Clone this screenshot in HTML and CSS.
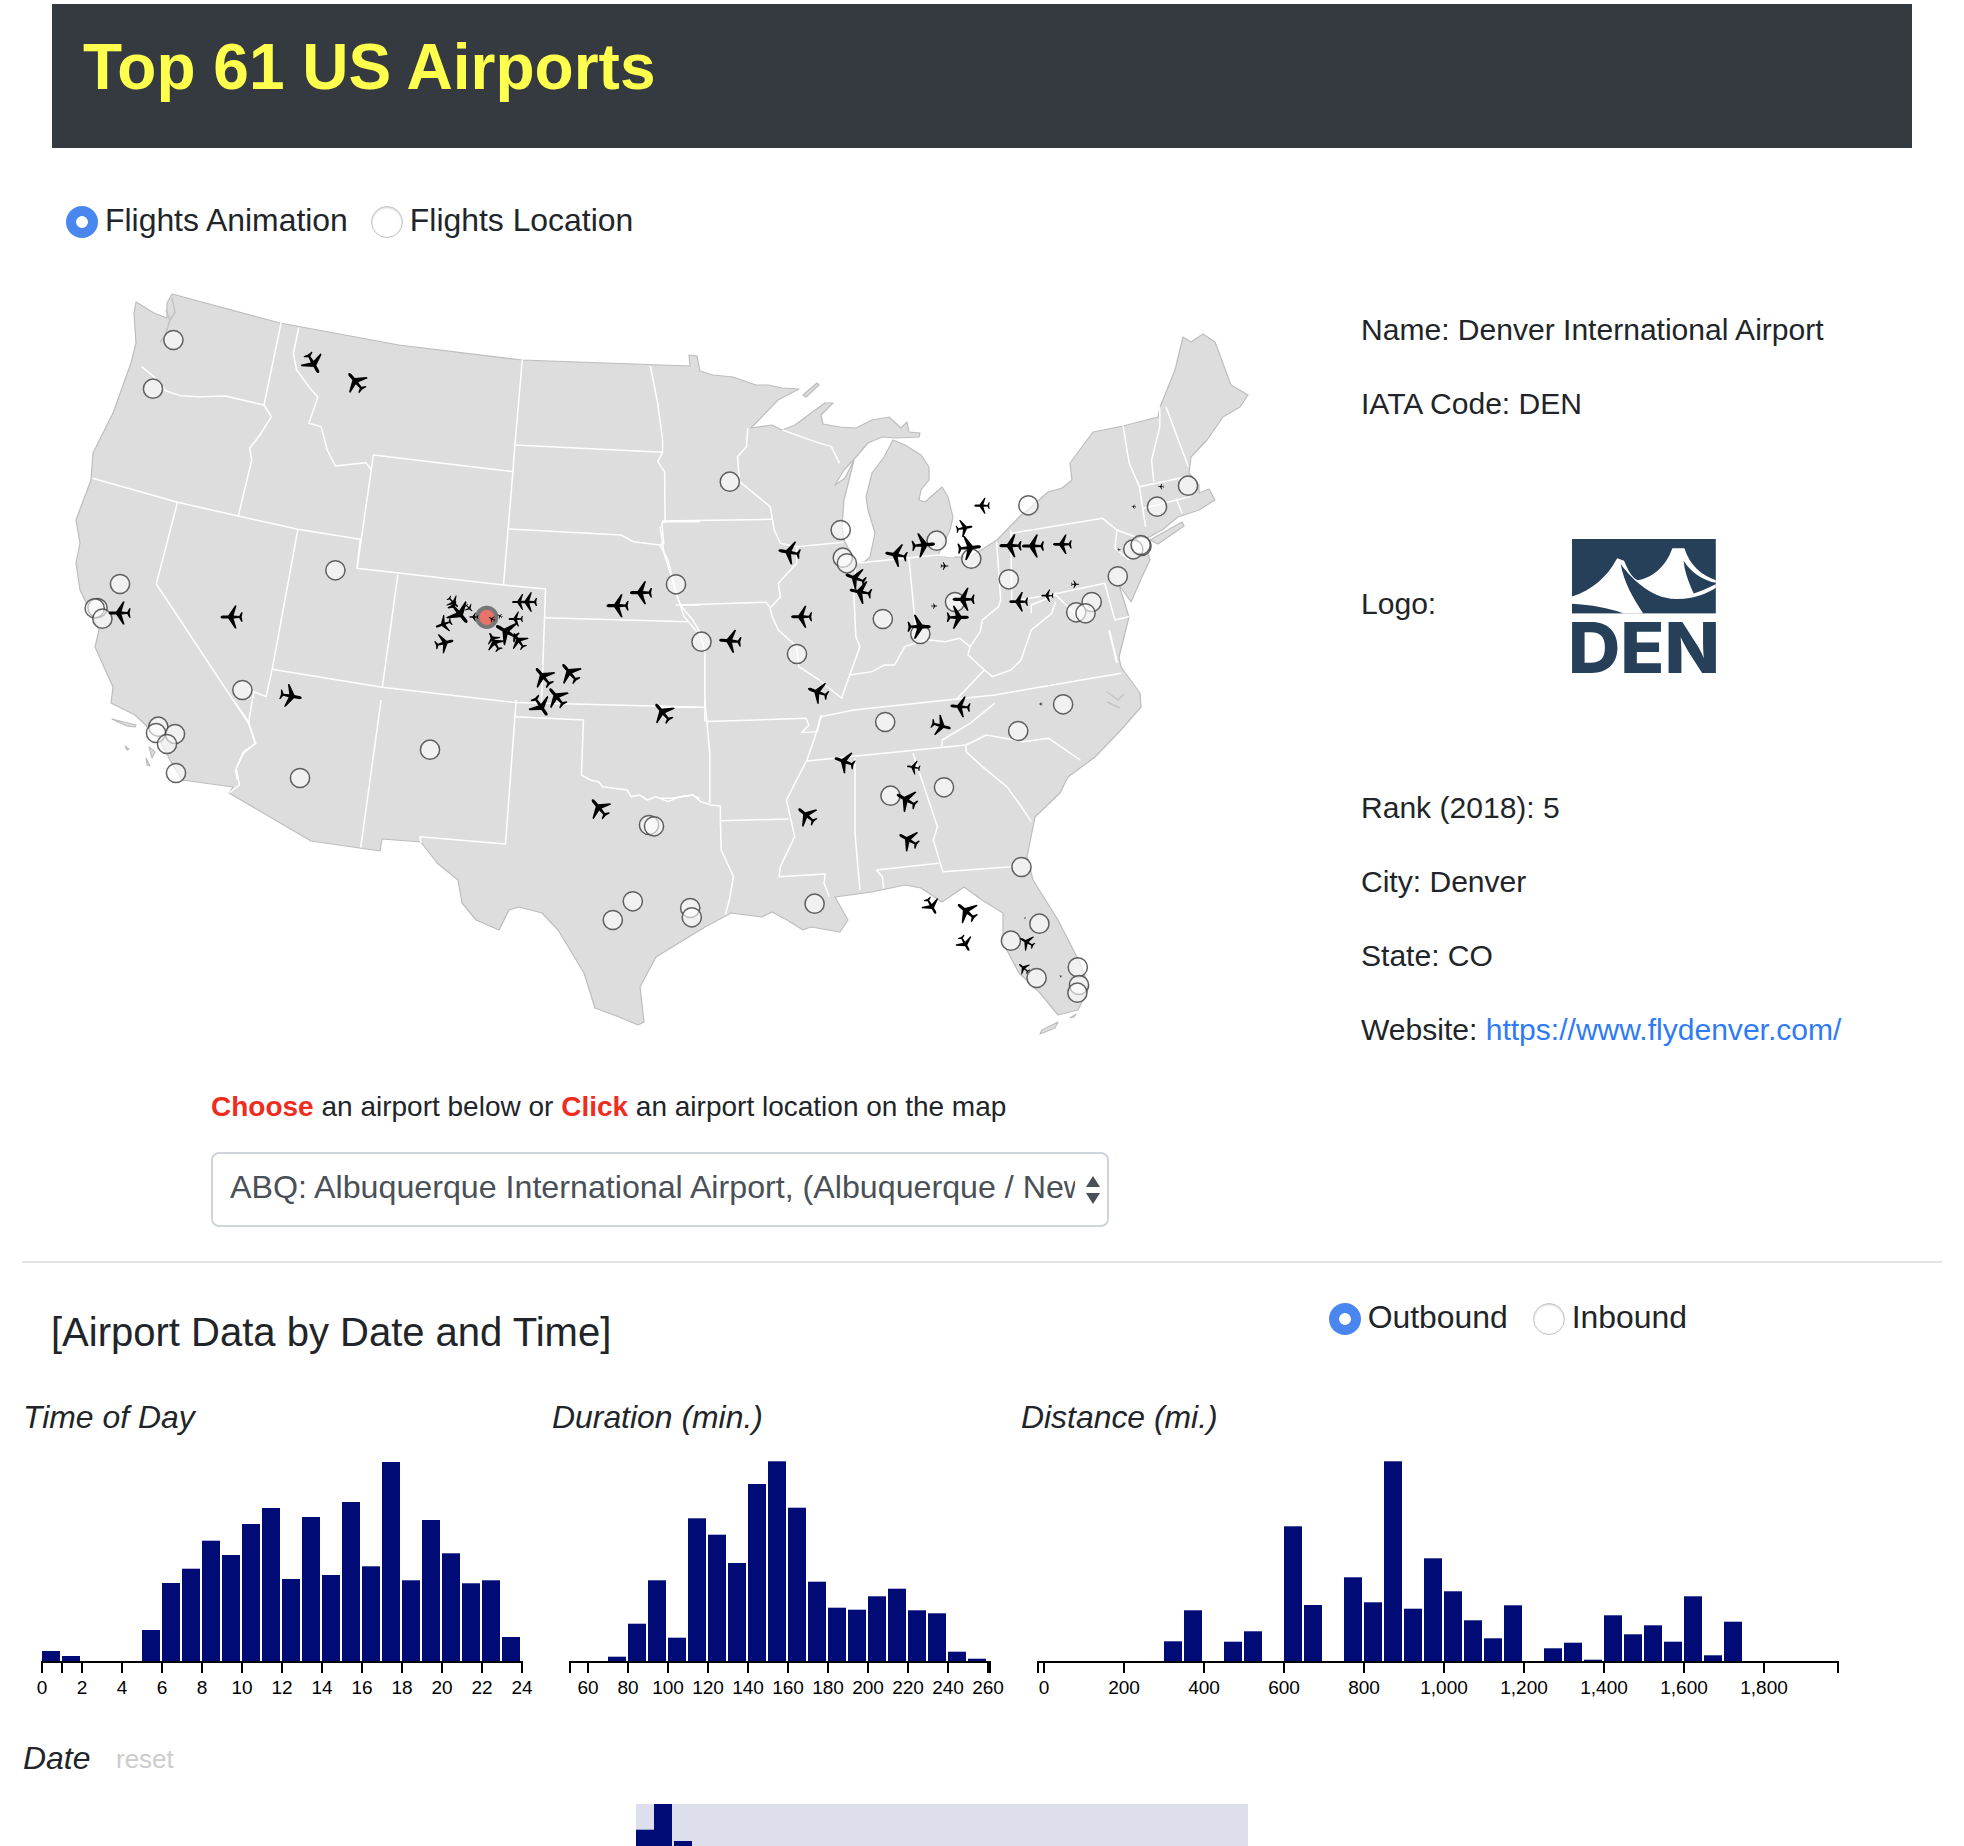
FILE: index.html
```html
<!DOCTYPE html>
<html lang="en">
<head>
<meta charset="utf-8">
<title>Top 61 US Airports</title>
<link rel="stylesheet" href="styles.css">
</head>
<body>
<header class="banner"><h1>Top 61 US Airports</h1></header>

<div class="radios radios-map">
  <label class="radio"><input type="radio" name="mode" checked>Flights Animation</label>
  <label class="radio"><input type="radio" name="mode">Flights Location</label>
</div>

<main class="top">
  <svg class="map" viewBox="52 270 1309 790" width="1309" height="790" role="img" aria-label="US map">
    <defs>
      <path id="plane" d="M0-11.5C1-11.5 1.6-10 1.6-8.5L1.6-3.8 11.5 3 11.5 4.6 1.6 1.6 1.1 7.2 4.8 9.3 4.8 10.6 0 9.7-4.8 10.6-4.8 9.3-1.1 7.2-1.6 1.6-11.5 4.6-11.5 3-1.6-3.8-1.6-8.5C-1.6-10-1-11.5 0-11.5Z"/>
    </defs>
    <path class="land" d="M136 302L154 313 167 318 167 303 172 294 176 295 280 323 399 345 522 360 690 366 689 355 697 356 700 371 713 375 733 377 756 385 768 385 782 388 799 389 778 400 751 428 772 425 782 430 795 425 811 413 825 403 833 403 821 415 823 424 840 427 856 428 872 420 889 417 901 428 907 422 909 432 920 433 919 437 897 438 882 437 868 443 856 457 844 470 835 485 845 478 854 460 844 500 842 527 844 540 856 563 864 562 870 557 875 533 868 510 866 497 872 473 884 457 893 440 905 445 921 455 929 467 929 480 921 490 919 500 925 502 942 487 948 497 953 517 950 530 942 547 938 555 946 557 970 557 997 540 1019 517 1030 508 1048 492 1062 488 1072 480 1070 463 1093 432 1123 426 1158 417 1160 407 1175 370 1183 337 1191 342 1203 334 1215 342 1231 385 1248 395 1240 407 1223 417 1207 440 1191 457 1189 473 1199 485 1199 493 1209 489 1215 500 1199 510 1178 517 1162 530 1144 540 1150 560 1142 577 1131 602 1119 585 1129 617 1125 633 1119 657 1121 667 1140 693 1141 707 1121 730 1095 757 1068 777 1060 793 1035 817 1027 857 1033 880 1058 920 1080 963 1089 987 1078 1010 1058 1015 1040 993 1019 973 1003 943 1003 913 982 900 964 887 942 902 921 888 905 885 872 892 835 897 848 920 840 932 811 927 803 930 787 920 772 912 762 917 731 913 705 927 656 957 640 987 644 1022 638 1025 619 1017 595 1008 584 973 558 930 542 913 519 907 509 910 499 930 476 920 462 903 458 880 437 863 421 842 382 839 380 851 311 841 229 793 233 787 182 780 170 760 158 737 135 715 111 703 113 687 95 647 99 630 80 590 76 563 80 543 76 520 91 480 93 453 113 413 131 363 136 343 134 313Z"/>
    <path class="land" d="M803 395L817 383 819 385 806 397ZM1150 540L1182 522 1184 526 1158 544ZM112 719L118 722 127 726 135 727 136 725 124 722ZM125 746L129 749 127 750ZM149 747L152 758 155 752ZM146 758L150 766 147 765ZM1042 1030L1058 1022 1055 1028 1040 1034ZM1070 1018L1076 1014 1074 1017Z"/>
    <path class="coast" d="M166 310L170 320 165 336 160 342M172 298L175 312 168 324M1107 692L1118 700 1124 694M1107 702L1120 708"/>
    <path class="bay" d="M1109 630L1114 650 1117 663"/>

    <g class="borders" transform="translate(60 280) scale(.408 .3333)">
      <path d="M542 128L500 375 518 410 490 465 465 505 470 540 437 708"/>
      <path d="M200 260L230 290 260 333 295 347 340 350 405 348 500 375"/>
      <path d="M585 143L572 220 580 270 610 320 632 352 610 430 640 440 655 510 675 558 750 548 763 570"/>
      <path d="M763 570L768 525 1110 575 1087 915 728 865 763 570"/>
      <path d="M1133 240L1115 495 1110 575"/>
      <path d="M1115 495L1477 517"/>
      <path d="M1100 747L1375 765 1405 785 1470 795"/>
      <path d="M828 885L790 1222"/>
      <path d="M1087 915L1190 927 1180 1280"/>
      <path d="M1186 1013L1540 1025"/>
      <path d="M80 595L288 667 437 708 583 748 736 778 728 865"/>
      <path d="M583 748L520 1168 790 1222 1118 1268 1568 1282"/>
      <path d="M288 667L236 912 462 1330"/>
      <path d="M520 1168L505 1250 475 1235 462 1330 480 1390 450 1420 430 1470 435 1500"/>
      <path d="M1447 258L1465 370 1477 480 1477 517 1465 545 1482 575 1483 725 1475 730 1480 790 1470 795 1490 840 1510 940 1520 975 1530 1010 1540 1025 1568 1065"/>
      <path d="M1475 725L1568 725"/>
      <path d="M1510 975L1568 975"/>
    </g>
    <g class="borders" transform="translate(60 700) scale(.408 .3333)">
      <path d="M787 0L737 443"/>
      <path d="M1118 0L1115 50 1092 432 882 410 885 428"/>
      <path d="M1115 50L1283 60 1278 225 1300 240 1320 245 1330 260 1390 270 1400 290 1420 285 1440 300 1460 290 1490 305 1520 290 1550 285 1568 295"/>
      <path d="M425 0L462 65 478 132 450 155 432 205 440 255 415 278"/>
    </g>
    <g class="borders" transform="translate(660 300) scale(.408 .3333)">
      <path d="M215 385L212 440 190 470 195 545 240 590 270 620 280 690 295 730 335 740 335 790 290 850 295 890 270 925 275 950 290 990 335 1040 340 1100 390 1140 445 1195 465 1125 490 1040 480 1010 475 880 480 790"/>
      <path d="M335 740L450 727"/>
      <path d="M300 390L380 425 420 440 440 490"/>
      <path d="M5 663L275 658"/>
      <path d="M50 915L260 907 272 925"/>
      <path d="M0 680L10 760 40 880 50 915 80 960 95 990 110 1050 110 1265"/>
      <path d="M0 1222L110 1222"/>
      <path d="M112 1265L358 1255 365 1275 348 1298 385 1295 395 1250 475 1230 820 1185 1130 1120"/>
      <path d="M480 790L680 765 720 770"/>
      <path d="M610 775L628 1000"/>
      <path d="M825 725L835 900 830 920 790 960 785 995 760 1040"/>
      <path d="M465 1125L520 1115 550 1095 575 1095 600 1040 625 1030 660 1020 700 1025 735 1015 760 1040 755 1065 795 1110 815 1130 860 1110 885 1080 910 990 960 940 970 905"/>
      <path d="M860 690L862 905 975 880 1090 850 1115 960 1150 950"/>
      <path d="M910 940L910 915 970 885 1000 920 1040 970"/>
      <path d="M860 700L1085 655 1120 690 1115 745 1150 780"/>
      <path d="M1120 690L1185 720"/>
      <path d="M725 1200L795 1110"/>
      <path d="M1135 378L1150 490 1175 560 1190 680"/>
      <path d="M1225 320L1225 380 1205 480 1210 545"/>
      <path d="M1240 320L1295 500"/>
      <path d="M1175 560L1290 530"/>
      <path d="M1185 625L1300 590"/>
      <path d="M1265 595L1280 640"/>
    </g>
    <g class="borders" transform="translate(660 700) scale(.408 .3333)">
      <path d="M110 0L122 160 122 310"/>
      <path d="M0 295L30 295 80 285 100 305 125 315 148 318 148 362 150 450 180 530 170 600 160 645"/>
      <path d="M148 362L315 357"/>
      <path d="M395 45L380 110 360 180 310 300 330 410 295 500 292 530 405 522 402 550 415 590"/>
      <path d="M360 183L750 135 800 105 890 125 953 115 1030 180"/>
      <path d="M478 175L478 400 490 570"/>
      <path d="M620 160L680 380 670 420 693 515 862 500"/>
      <path d="M530 510L683 490"/>
      <path d="M530 510L545 530 548 565"/>
      <path d="M750 155L790 200 850 260 880 310 910 365"/>
      <path d="M750 135L750 155"/>
      <path d="M690 145L692 120 760 70 820 10"/>
    </g>

    <g class="airports">
      <circle cx="173.4" cy="340" r="9.6"/><circle cx="153" cy="388.7" r="9.6"/><circle cx="120" cy="584" r="9.6"/>
      <circle cx="97.5" cy="608" r="9.6"/><circle cx="94.7" cy="608.3" r="9.6"/><circle cx="102.4" cy="618.7" r="9.6"/>
      <circle cx="335.4" cy="570.3" r="9.6"/><circle cx="242.4" cy="690" r="9.6"/><circle cx="158.3" cy="726.7" r="9.6"/>
      <circle cx="156" cy="733" r="9.6"/><circle cx="175" cy="734" r="9.6"/><circle cx="167" cy="744" r="9.6"/>
      <circle cx="176" cy="773" r="9.6"/><circle cx="300" cy="778" r="9.6"/><circle cx="430" cy="749.7" r="9.6"/>
      <circle cx="676" cy="584.3" r="9.6"/><circle cx="701.5" cy="641.7" r="9.6"/><circle cx="729.8" cy="481.7" r="9.6"/>
      <circle cx="840.7" cy="530" r="9.6"/><circle cx="842.8" cy="557.7" r="9.6"/><circle cx="846.9" cy="563.3" r="9.6"/>
      <circle cx="797" cy="654" r="9.6"/><circle cx="882.8" cy="619" r="9.6"/><circle cx="936.6" cy="540.7" r="9.6"/>
      <circle cx="971.3" cy="558.7" r="9.6"/><circle cx="955" cy="602" r="9.6"/><circle cx="920.3" cy="634" r="9.6"/>
      <circle cx="1008.8" cy="579.3" r="9.6"/><circle cx="1028.4" cy="505.3" r="9.6"/><circle cx="1188" cy="485.7" r="9.6"/>
      <circle cx="1157" cy="506.7" r="9.6"/><circle cx="1141.5" cy="546" r="9.6"/><circle cx="1133.3" cy="549.3" r="9.6"/>
      <circle cx="1140.6" cy="545" r="9.6"/><circle cx="1117.8" cy="576.3" r="9.6"/><circle cx="1091.7" cy="602" r="9.6"/>
      <circle cx="1076.2" cy="612.3" r="9.6"/><circle cx="1085.5" cy="613.3" r="9.6"/><circle cx="1063.1" cy="704.3" r="9.6"/>
      <circle cx="885.2" cy="722" r="9.6"/><circle cx="1018.2" cy="731" r="9.6"/><circle cx="890.5" cy="795.7" r="9.6"/>
      <circle cx="944" cy="787.3" r="9.6"/><circle cx="1021.5" cy="867" r="9.6"/><circle cx="814.6" cy="903.7" r="9.6"/>
      <circle cx="690.2" cy="908" r="9.6"/><circle cx="691.8" cy="917.3" r="9.6"/><circle cx="1039.4" cy="923.7" r="9.6"/>
      <circle cx="1010.9" cy="940.7" r="9.6"/><circle cx="1036.6" cy="978" r="9.6"/><circle cx="1077.8" cy="967.3" r="9.6"/>
      <circle cx="1079" cy="985" r="9.6"/><circle cx="1077.4" cy="992.7" r="9.6"/><circle cx="649" cy="825" r="9.6"/>
      <circle cx="654" cy="826.3" r="9.6"/><circle cx="632.8" cy="901.3" r="9.6"/><circle cx="612.8" cy="920" r="9.6"/>
    </g>
    <circle class="airport-selected" cx="486.8" cy="617.3" r="9.6"/>

    <g class="planes">
      <use href="#plane" transform="translate(313 363) rotate(150)"/>
      <use href="#plane" transform="translate(356 382) rotate(-40)"/>
      <use href="#plane" transform="translate(120 613) rotate(-90)"/>
      <use href="#plane" transform="translate(232 617) rotate(-90)"/>
      <use href="#plane" transform="translate(290.5 696) rotate(100)"/>
      <use href="#plane" transform="translate(453 602) rotate(135) scale(.6)"/>
      <use href="#plane" transform="translate(469 608) rotate(135) scale(.4)"/>
      <use href="#plane" transform="translate(459 613) rotate(140) scale(1.1)"/>
      <use href="#plane" transform="translate(444 624) rotate(-110) scale(.75)"/>
      <use href="#plane" transform="translate(444 643) rotate(75) scale(.85)"/>
      <use href="#plane" transform="translate(474 617) rotate(-90) scale(.4)"/>
      <use href="#plane" transform="translate(520 602) rotate(-90) scale(.7)"/>
      <use href="#plane" transform="translate(528 602) rotate(-90) scale(.85)"/>
      <use href="#plane" transform="translate(516 619) rotate(-90) scale(.65)"/>
      <use href="#plane" transform="translate(507 632) rotate(-60) scale(1.1)"/>
      <use href="#plane" transform="translate(519 641) rotate(-35) scale(.8)"/>
      <use href="#plane" transform="translate(495 643) rotate(-30) scale(.8)"/>
      <use href="#plane" transform="translate(493 639) rotate(-30) scale(.6)"/>
      <use href="#plane" transform="translate(492 619) rotate(-60) scale(.3)"/>
      <use href="#plane" transform="translate(500 616) rotate(-60) scale(.25)"/>
      <use href="#plane" transform="translate(543.5 677) rotate(-40)"/>
      <use href="#plane" transform="translate(570 673) rotate(-40)"/>
      <use href="#plane" transform="translate(557 697.3) rotate(-40)"/>
      <use href="#plane" transform="translate(540.6 706) rotate(145)"/>
      <use href="#plane" transform="translate(618 605.7) rotate(-90)"/>
      <use href="#plane" transform="translate(641.4 592.7) rotate(-90)"/>
      <use href="#plane" transform="translate(663 712.7) rotate(-40)"/>
      <use href="#plane" transform="translate(789.7 552.3) rotate(-80)"/>
      <use href="#plane" transform="translate(896.6 555) rotate(-80)"/>
      <use href="#plane" transform="translate(923 545) rotate(85) scale(1.05)"/>
      <use href="#plane" transform="translate(968.9 547.7) rotate(85) scale(1.05)"/>
      <use href="#plane" transform="translate(964 528) rotate(80) scale(.75)"/>
      <use href="#plane" transform="translate(982.3 505.7) rotate(-90) scale(.7)"/>
      <use href="#plane" transform="translate(944.4 566) rotate(90) scale(.35)"/>
      <use href="#plane" transform="translate(855.8 578.3) rotate(-70) scale(.95)"/>
      <use href="#plane" transform="translate(861 592) rotate(-80)"/>
      <use href="#plane" transform="translate(802 616.7) rotate(-90) scale(.95)"/>
      <use href="#plane" transform="translate(730.6 641) rotate(-85)"/>
      <use href="#plane" transform="translate(818.3 692.3) rotate(-70) scale(.95)"/>
      <use href="#plane" transform="translate(964 599.3) rotate(-90)"/>
      <use href="#plane" transform="translate(957.4 617.3) rotate(90)"/>
      <use href="#plane" transform="translate(918.7 626.7) rotate(90) scale(1.05)"/>
      <use href="#plane" transform="translate(934.2 606) rotate(90) scale(.25)"/>
      <use href="#plane" transform="translate(1010.9 545.7) rotate(-90)"/>
      <use href="#plane" transform="translate(1033.3 546) rotate(-90)"/>
      <use href="#plane" transform="translate(1062.7 544.3) rotate(-90) scale(.85)"/>
      <use href="#plane" transform="translate(1019 601.7) rotate(-90) scale(.85)"/>
      <use href="#plane" transform="translate(1047.6 595.7) rotate(-90) scale(.55)"/>
      <use href="#plane" transform="translate(1075 584.3) rotate(90) scale(.35)"/>
      <use href="#plane" transform="translate(1161 486.7) rotate(-90) scale(.25)"/>
      <use href="#plane" transform="translate(1133.7 506.7) rotate(-90) scale(.2)"/>
      <use href="#plane" transform="translate(1119 549.7) rotate(90) scale(.15)"/>
      <use href="#plane" transform="translate(1040.7 704) rotate(-90) scale(.15)"/>
      <use href="#plane" transform="translate(960.7 706.7) rotate(-85) scale(.9)"/>
      <use href="#plane" transform="translate(940.7 725.7) rotate(105) scale(.9)"/>
      <use href="#plane" transform="translate(844.8 761.7) rotate(-70) scale(.95)"/>
      <use href="#plane" transform="translate(913.8 767.3) rotate(-80) scale(.6)"/>
      <use href="#plane" transform="translate(906.8 800) rotate(-60)"/>
      <use href="#plane" transform="translate(806.9 815.7) rotate(-50) scale(.95)"/>
      <use href="#plane" transform="translate(908.9 840) rotate(-60) scale(.95)"/>
      <use href="#plane" transform="translate(931.3 905.7) rotate(150) scale(.8)"/>
      <use href="#plane" transform="translate(966.8 911.7) rotate(-50)"/>
      <use href="#plane" transform="translate(964.8 943.3) rotate(150) scale(.75)"/>
      <use href="#plane" transform="translate(1027.2 942.3) rotate(-60) scale(.7)"/>
      <use href="#plane" transform="translate(1024 968.3) rotate(-50) scale(.55)"/>
      <use href="#plane" transform="translate(1060.7 976.3) rotate(-50) scale(.12)"/>
      <use href="#plane" transform="translate(1025 918) rotate(-50) scale(.1)"/>
      <use href="#plane" transform="translate(599.4 808.3) rotate(-40)"/>
    </g>
  </svg>

  <aside class="info">
    <p>Name: Denver International Airport</p>
    <p>IATA Code: DEN</p>
    <div class="logo-row">
      <span class="logo-label">Logo:</span>
      <svg class="logo" viewBox="0 0 144 134" width="144" height="134" role="img" aria-label="DEN logo">
        <g transform="translate(-232.4 -238.7) scale(.3448 .4912)">
          <path class="logo-dark" d="M674 486H1091V637H674Z"/>
          <path class="logo-light" d="M674 603C730 590 775 565 805 525L825 530C840 555 850 565 865 570 905 565 945 545 965 505H1000C1015 540 1050 560 1091 570V637H674Z"/>
          <path class="logo-dark" d="M815 537C840 560 900 610 980 608 1030 608 1070 595 1091 585V637H880C850 605 825 575 815 537Z"/>
          <path class="logo-dark" d="M998 530C1020 555 1055 570 1091 575V578C1070 585 1050 592 1027 597 1010 570 1000 550 998 530Z"/>
          <path class="logo-dark" d="M674 618C730 620 780 627 822 637H674Z"/>
        </g>
        <text class="logo-text" x="-4" y="134" textLength="152" lengthAdjust="spacingAndGlyphs">DEN</text>
      </svg>
    </div>
    <p>Rank (2018): 5</p>
    <p>City: Denver</p>
    <p>State: CO</p>
    <p class="info-last">Website: <a href="#">https://www.flydenver.com/</a></p>
  </aside>
</main>

<p class="hint"><b>Choose</b> an airport below or <b>Click</b> an airport location on the map</p>
<div class="select">
  <span class="select-value">ABQ: Albuquerque International Airport, (Albuquerque / New Mexico)</span>
  <span class="select-arrows"><i class="up"></i><i class="down"></i></span>
</div>

<hr class="rule">

<section class="data-head">
  <h2>[Airport Data by Date and Time]</h2>
  <div class="radios">
    <label class="radio"><input type="radio" name="dir" checked>Outbound</label>
    <label class="radio"><input type="radio" name="dir">Inbound</label>
  </div>
</section>

<section class="charts">
  <figure class="chart chart-time">
    <figcaption>Time of Day</figcaption>
    <svg viewBox="22 1437 530 268" width="530" height="268">
      <g class="bars" transform="matrix(1 0 0 -1 0 1661)">
        <rect x="42" height="10"/><rect x="62" height="5"/><rect x="142" height="31"/><rect x="162" height="78"/><rect x="182" height="92.3"/><rect x="202" height="120.3"/><rect x="222" height="106"/><rect x="242" height="137"/><rect x="262" height="153"/><rect x="282" height="82"/><rect x="302" height="144"/><rect x="322" height="86"/><rect x="342" height="159"/><rect x="362" height="94.7"/><rect x="382" height="199"/><rect x="402" height="80.7"/><rect x="422" height="141"/><rect x="442" height="107.7"/><rect x="462" height="77.7"/><rect x="482" height="80.7"/><rect x="502" height="24"/>
      </g>
      <path class="axis" d="M42 1673V1662H522V1673M82 1662V1673M122 1662V1673M162 1662V1673M202 1662V1673M242 1662V1673M282 1662V1673M322 1662V1673M362 1662V1673M402 1662V1673M442 1662V1673M482 1662V1673M62 1662V1673"/>
      <g class="ticks">
        <text x="42" y="1694">0</text><text x="82" y="1694">2</text><text x="122" y="1694">4</text><text x="162" y="1694">6</text><text x="202" y="1694">8</text><text x="242" y="1694">10</text><text x="282" y="1694">12</text><text x="322" y="1694">14</text><text x="362" y="1694">16</text><text x="402" y="1694">18</text><text x="442" y="1694">20</text><text x="482" y="1694">22</text><text x="522" y="1694">24</text>
      </g>
    </svg>
  </figure>
  <figure class="chart chart-duration">
    <figcaption>Duration (min.)</figcaption>
    <svg viewBox="552 1437 469 268" width="469" height="268">
      <g class="bars" transform="matrix(1 0 0 -1 0 1661)">
        <rect x="608" height="4.3"/><rect x="628" height="37.3"/><rect x="648" height="80.7"/><rect x="668" height="23.3"/><rect x="688" height="142.7"/><rect x="708" height="126.3"/><rect x="728" height="98"/><rect x="748" height="177"/><rect x="768" height="199.7"/><rect x="788" height="153.3"/><rect x="808" height="79.3"/><rect x="828" height="53.3"/><rect x="848" height="51.3"/><rect x="868" height="64.7"/><rect x="888" height="72.3"/><rect x="908" height="50.7"/><rect x="928" height="47.7"/><rect x="948" height="9.3"/><rect x="968" height="2.3"/>
      </g>
      <path class="axis" d="M570 1673V1662H990V1673M588 1662V1673M628 1662V1673M668 1662V1673M708 1662V1673M748 1662V1673M788 1662V1673M828 1662V1673M868 1662V1673M908 1662V1673M948 1662V1673M988 1662V1673"/>
      <g class="ticks">
        <text x="588" y="1694">60</text><text x="628" y="1694">80</text><text x="668" y="1694">100</text><text x="708" y="1694">120</text><text x="748" y="1694">140</text><text x="788" y="1694">160</text><text x="828" y="1694">180</text><text x="868" y="1694">200</text><text x="908" y="1694">220</text><text x="948" y="1694">240</text><text x="988" y="1694">260</text>
      </g>
    </svg>
  </figure>
  <figure class="chart chart-distance">
    <figcaption>Distance (mi.)</figcaption>
    <svg viewBox="1021 1437 840 268" width="840" height="268">
      <g class="bars" transform="matrix(1 0 0 -1 0 1661)">
        <rect x="1164" height="19.7"/><rect x="1184" height="50.7"/><rect x="1224" height="19.3"/><rect x="1244" height="29.7"/><rect x="1284" height="134.7"/><rect x="1304" height="56"/><rect x="1344" height="83.7"/><rect x="1364" height="58.7"/><rect x="1384" height="199.7"/><rect x="1404" height="52.3"/><rect x="1424" height="102.7"/><rect x="1444" height="69.7"/><rect x="1464" height="40.7"/><rect x="1484" height="22.7"/><rect x="1504" height="55.7"/><rect x="1544" height="12.7"/><rect x="1564" height="18.3"/><rect x="1584" height="1.3"/><rect x="1604" height="45.7"/><rect x="1624" height="26.7"/><rect x="1644" height="35.7"/><rect x="1664" height="19.3"/><rect x="1684" height="64.7"/><rect x="1704" height="5.7"/><rect x="1724" height="39.3"/>
      </g>
      <path class="axis" d="M1038 1673V1662H1838V1673M1044 1662V1673M1124 1662V1673M1204 1662V1673M1284 1662V1673M1364 1662V1673M1444 1662V1673M1524 1662V1673M1604 1662V1673M1684 1662V1673M1764 1662V1673"/>
      <g class="ticks">
        <text x="1044" y="1694">0</text><text x="1124" y="1694">200</text><text x="1204" y="1694">400</text><text x="1284" y="1694">600</text><text x="1364" y="1694">800</text><text x="1444" y="1694">1,000</text><text x="1524" y="1694">1,200</text><text x="1604" y="1694">1,400</text><text x="1684" y="1694">1,600</text><text x="1764" y="1694">1,800</text>
      </g>
    </svg>
  </figure>
</section>

<section class="date">
  <div class="date-head"><span class="date-title">Date</span><span class="reset">reset</span></div>
  <svg class="date-chart" viewBox="636 1804 612 42" width="612" height="42">
    <rect class="date-bg" x="636" y="1804" width="612" height="42"/>
    <g class="bars" transform="matrix(1 0 0 -1 0 1846)">
      <rect x="636" height="16.3"/><rect x="654" height="42"/><rect x="674" height="5"/>
    </g>
  </svg>
</section>
</body>
</html>
```
FILE: styles.css
```css
* { box-sizing: border-box; }
html, body { margin: 0; padding: 0; background: #fff; }
body { width: 1964px; height: 1846px; overflow: hidden; font-family: "Liberation Sans", Arial, sans-serif; color: #212529; }

.banner { margin: 4px 52px 0; height: 144px; background: #343a40; display: flex; align-items: center; padding: 0 0 18px 31px; }
.banner h1 { margin: 0; font-size: 64px; line-height: 72px; font-weight: 700; color: #ffff4d; }

.radios { display: flex; gap: 25px; }
.radios-map { margin: 58px 0 0 66px; gap: 23px; }
.radio { display: flex; align-items: flex-start; height: 32px; font-size: 31.9px; line-height: 28px; gap: 7px; }
.radio input { appearance: none; -webkit-appearance: none; margin: 0; width: 32px; height: 32px; border-radius: 50%; border: 1.5px solid #c4c4c4; background: #fff; box-shadow: inset 0 1px 2px rgba(0,0,0,.18); }
.radio input:checked { border: 0; box-shadow: none; background: radial-gradient(circle, #fff 5.5px, #4a86f0 6.2px); }

.top { display: flex; margin: 32px 0 0 52px; }
.map { display: block; flex: none; }
.land { fill: #ddd; stroke: #bdbdbd; stroke-width: 1.2; stroke-linejoin: round; }
.coast { fill: none; stroke: #c4c4c4; stroke-width: 1.5; }
.bay { fill: none; stroke: #fff; stroke-width: 2; }
.borders path { fill: none; stroke: #fff; stroke-width: 1.5; stroke-linejoin: round; vector-effect: non-scaling-stroke; }
.airports circle { fill: rgba(255,255,255,.6); stroke: rgba(70,70,70,.85); stroke-width: 1.5; }
.airport-selected { fill: #e8736b; stroke: #777; stroke-width: 4; }
.planes use { fill: #000; }

.info { padding-top: 37.5px; font-size: 30.05px; line-height: 44px; }
.info p { margin: 0 0 30px; white-space: nowrap; }
.info .info-last { margin-bottom: 0; }
.info a { color: #2f7bf5; text-decoration: none; }
.logo-row { display: flex; align-items: center; height: 300.5px; margin-bottom: 30px; }
.logo-label { width: 211px; padding-bottom: 4px; }
.logo { display: block; overflow: visible; }
.logo-dark { fill: #264059; }
.logo-light { fill: #fff; }
.logo-text { font-family: Inter, "Liberation Sans", sans-serif; font-weight: 800; font-size: 70px; fill: #264059; }

.hint { margin: 27px 0 0 211px; font-size: 28px; line-height: 40px; color: #212529; }
.hint b { color: #ee2d1f; }

.select { margin: 25px 0 0 211px; width: 898px; height: 75px; border: 2px solid #ced4da; border-radius: 8px; display: flex; align-items: center; padding-left: 17px; font-size: 32.2px; color: #495057; background: #fff; }
.select-value { width: 845px; overflow: hidden; white-space: nowrap; padding-bottom: 4px; }
.select-arrows { display: flex; flex-direction: column; gap: 6px; margin-left: 11px; }
.select-arrows i { display: block; width: 0; height: 0; border-left: 7.5px solid transparent; border-right: 7.5px solid transparent; }
.select-arrows .up { border-bottom: 11px solid #495057; }
.select-arrows .down { border-top: 11px solid #495057; }

.rule { margin: 34px 22px 0; height: 2px; border: 0; background: #e4e4e4; }

.data-head { display: flex; justify-content: space-between; align-items: flex-start; height: 134px; padding: 0 277px 0 51px; }
.data-head h2 { margin: 47px 0 0; font-size: 40px; line-height: 44px; font-weight: 400; }
.data-head .radios { margin-top: 40px; }

.charts { display: flex; margin-left: 22px; }
.chart { margin: 0; flex: none; }
.chart figcaption { font-size: 31.9px; line-height: 40px; font-style: italic; }
.chart svg { display: block; }
.chart-time figcaption { padding-left: 1px; }
.bars rect { width: 18px; fill: #000b76; }
.axis { fill: none; stroke: #000; stroke-width: 2; }
.ticks text { font-size: 19px; text-anchor: middle; fill: #000; }

.date { margin-top: 33px; }
.date-head { display: flex; align-items: center; height: 40px; padding-left: 23px; margin-top: 2px; }
.date-title { font-size: 31.9px; font-style: italic; width: 93px; }
.reset { font-size: 26px; color: #ccc; padding-top: 2px; }
.date-chart { display: block; margin: 26px 0 0 636px; }
.date-bg { fill: #dde0ec; }
```
